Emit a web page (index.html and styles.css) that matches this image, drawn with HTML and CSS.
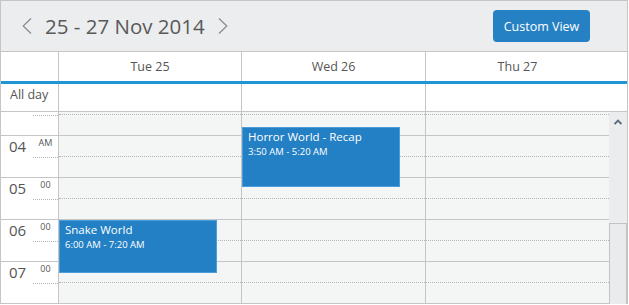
FILE: index.html
```html
<!DOCTYPE html>
<html lang="en">
<head>
  <meta charset="UTF-8">
  <title>Scheduler</title>
  <link rel="stylesheet" href="styles.css">
</head>
<body>

<div class="scheduler">
  <div class="toolbar">
    <div class="nav">
      <button class="arrow" title="Previous">
        <svg width="10" height="16" viewBox="0 0 10 16"><polyline points="9,0.5 1.2,8 9,15.5" fill="none" stroke="#8a8a8a" stroke-width="1.2"/></svg>
      </button>
      <span class="range">25 - 27 Nov 2014</span>
      <button class="arrow" title="Next">
        <svg width="10" height="16" viewBox="0 0 10 16"><polyline points="1,0.5 8.8,8 1,15.5" fill="none" stroke="#8a8a8a" stroke-width="1.2"/></svg>
      </button>
    </div>
    <button class="custom-btn">Custom View</button>
  </div>

  <div class="day-head">
    <div class="head-cell"></div>
    <div class="head-cell">Tue 25</div>
    <div class="head-cell">Wed 26</div>
    <div class="head-cell last">Thu 27</div>
  </div>

  <div class="allday">
    <div class="allday-cell label">All day</div>
    <div class="allday-cell"></div>
    <div class="allday-cell"></div>
    <div class="allday-cell last"></div>
  </div>

  <div class="body">
    <div class="viewport">
      <div class="grid">
        <div class="times">
          <div class="t-hour"><span class="t-num"></span><span class="t-min"></span></div>
          <div class="t-hour"><span class="t-num">04</span><span class="t-min">AM</span></div>
          <div class="t-hour"><span class="t-num">05</span><span class="t-min">00</span></div>
          <div class="t-hour"><span class="t-num">06</span><span class="t-min">00</span></div>
          <div class="t-hour"><span class="t-num">07</span><span class="t-min">00</span></div>
          <div class="t-hour"><span class="t-num"></span><span class="t-min"></span></div>
        </div>

        <div class="col">
          <div class="slot half"></div><div class="slot full"></div>
          <div class="slot half"></div><div class="slot full"></div>
          <div class="slot half"></div><div class="slot full"></div>
          <div class="slot half"></div><div class="slot full"></div>
          <div class="slot half"></div><div class="slot full"></div>
          <div class="slot half"></div><div class="slot full"></div>
          <div class="event snake">
            <div class="ev-title">Snake World</div>
            <div class="ev-time">6:00 AM - 7:20 AM</div>
          </div>
        </div>

        <div class="col">
          <div class="slot half"></div><div class="slot full"></div>
          <div class="slot half"></div><div class="slot full"></div>
          <div class="slot half"></div><div class="slot full"></div>
          <div class="slot half"></div><div class="slot full"></div>
          <div class="slot half"></div><div class="slot full"></div>
          <div class="slot half"></div><div class="slot full"></div>
          <div class="event horror">
            <div class="ev-title">Horror World - Recap</div>
            <div class="ev-time">3:50 AM - 5:20 AM</div>
          </div>
        </div>

        <div class="col last">
          <div class="slot half"></div><div class="slot full"></div>
          <div class="slot half"></div><div class="slot full"></div>
          <div class="slot half"></div><div class="slot full"></div>
          <div class="slot half"></div><div class="slot full"></div>
          <div class="slot half"></div><div class="slot full"></div>
          <div class="slot half"></div><div class="slot full"></div>
        </div>
      </div>
    </div>

    <div class="scrollbar">
      <div class="sb-arrow">
        <svg width="8" height="6" viewBox="0 0 8 6"><polyline points="0.6,5 4,1.6 7.4,5" fill="none" stroke="#5b6b7b" stroke-width="1.8"/></svg>
      </div>
      <div class="sb-track"></div>
      <div class="sb-thumb"></div>
    </div>
  </div>
</div>

</body>
</html>
```

FILE: styles.css
```css
body {
  margin: 0;
  font-family: "Open Sans", "Noto Sans", sans-serif;
  background: #fff;
  overflow: hidden;
}

.scheduler {
  width: 626px;
  height: 303px;
  border: 1px solid #c5c5c5;
  border-bottom: none;
  overflow: hidden;
}

.toolbar {
  height: 50px;
  background: #ebedee;
  border-bottom: 1px solid #c5c5c5;
  display: flex;
  align-items: center;
  justify-content: space-between;
  padding: 0 37px 0 21px;
}

.nav {
  display: flex;
  align-items: center;
  gap: 13px;
}

.arrow {
  border: none;
  background: none;
  padding: 0;
  display: flex;
  cursor: pointer;
}

.range {
  font-size: 20.5px;
  color: #595959;
}

.custom-btn {
  width: 97px;
  height: 32px;
  background: #2581c4;
  color: #fff;
  border: none;
  border-radius: 4px;
  font-family: "Open Sans", sans-serif;
  font-size: 12.5px;
  cursor: pointer;
}

.day-head, .allday {
  display: grid;
  grid-template-columns: 58px 183px 184px 1fr;
}

.day-head {
  height: 29px;
  border-bottom: 3px solid #1e96d4;
}

.head-cell {
  border-right: 1px solid #c5c5c5;
  text-align: center;
  line-height: 29px;
  font-size: 12.5px;
  color: #555;
}

.head-cell.last, .allday-cell.last { border-right: none; padding-right: 18px; }

.allday {
  height: 27px;
  border-bottom: 1px solid #c5c5c5;
}

.allday-cell { border-right: 1px solid #c5c5c5; }

.allday-cell.label {
  font-size: 12.5px;
  color: #555;
  padding: 2px 0 0 9px;
  line-height: 18px;
}

.body {
  display: flex;
  height: 193px;
}

.viewport {
  width: 608px;
  overflow: hidden;
}

.grid {
  display: grid;
  grid-template-columns: 58px 183px 184px 183px;
  margin-top: -18px;
}

.times {
  background: #fff;
  border-right: 1px solid #c5c5c5;
}

.t-hour {
  display: flex;
  height: 41px;
  border-bottom: 1px solid #c5c5c5;
}

.t-num {
  box-sizing: border-box;
  width: 32px;
  padding-left: 8px;
  font-size: 15px;
  line-height: 20px;
  color: #555;
}

.t-min {
  flex: 1;
  height: 20px;
  border-bottom: 1px dotted #b5b5b5;
  text-align: center;
  font-size: 9px;
  line-height: 12px;
  padding-top: 1px;
  color: #555;
}

.col {
  position: relative;
  background: #f4f6f6;
  border-right: 1px solid #c5c5c5;
}

.col.last { border-right: none; }

.slot { height: 20px; }
.slot.half { border-bottom: 1px dotted #b5b5b5; }
.slot.full { border-bottom: 1px solid #c5c5c5; }

.event {
  position: absolute;
  left: 0;
  box-sizing: border-box;
  width: 158px;
  background: #2380c4;
  border: 1px solid #4c9ddb;
  color: #fff;
  padding: 1px 5px;
}

.event.horror { top: 33px; height: 60px; }
.event.snake { top: 126px; height: 53px; }

.ev-title {
  font-size: 11.5px;
  line-height: 16px;
}

.ev-time {
  font-size: 9.5px;
  line-height: 14px;
}

.scrollbar {
  width: 18px;
  background: #ebecee;
  display: flex;
  flex-direction: column;
}

.sb-arrow {
  height: 20px;
  display: flex;
  align-items: center;
  justify-content: center;
}

.sb-track { height: 91px; }

.sb-thumb {
  flex: 1;
  border: 1px solid #c3c3c3;
  border-bottom: none;
  background: #eaebed;
}
```
